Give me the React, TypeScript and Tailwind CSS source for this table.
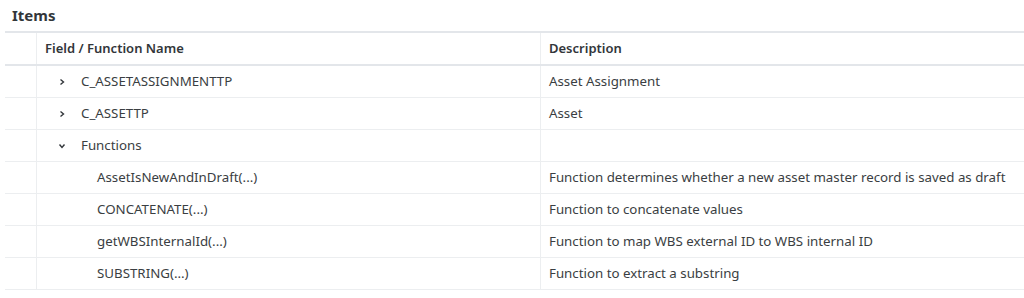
import React from "react";

type Row = { name: string; desc: string; level: 0 | 1; chevron?: "right" | "down" };

const rows: Row[] = [
  { name: "C_ASSETASSIGNMENTTP", desc: "Asset Assignment", level: 0, chevron: "right" },
  { name: "C_ASSETTP", desc: "Asset", level: 0, chevron: "right" },
  { name: "Functions", desc: "", level: 0, chevron: "down" },
  { name: "AssetIsNewAndInDraft(...)", desc: "Function determines whether a new asset master record is saved as draft", level: 1 },
  { name: "CONCATENATE(...)", desc: "Function to concatenate values", level: 1 },
  { name: "getWBSInternalId(...)", desc: "Function to map WBS external ID to WBS internal ID", level: 1 },
  { name: "SUBSTRING(...)", desc: "Function to extract a substring", level: 1 },
];

function Chevron({ dir }: { dir: "right" | "down" }) {
  return (
    <svg width="8" height="8" viewBox="0 0 8 8" className="shrink-0">
      {dir === "right" ? (
        <path d="M2.5 1.5 L5.5 4 L2.5 6.5" fill="none" stroke="#32363a" strokeWidth="1.4" />
      ) : (
        <path d="M1.5 2.5 L4 5.5 L6.5 2.5" fill="none" stroke="#32363a" strokeWidth="1.4" />
      )}
    </svg>
  );
}

export default function App() {
  return (
    <div
      className="w-[1024px] h-[298px] bg-white overflow-hidden text-[#32363a]"
      style={{ fontFamily: '"Noto Sans", "Open Sans", Arial, sans-serif' }}
    >
      <div className="h-[31px] pl-[12px] pt-[5px] text-[15px] font-bold leading-[20px]">Items</div>
      <div className="ml-[5px]">
        <div className="flex h-[35px] border-t-2 border-b-2 border-[#e3e6ea] text-[13px] font-semibold">
          <div className="w-[32px] border-r border-[#eceef0]" />
          <div className="w-[504px] pl-[8px] flex items-center border-r border-[#eceef0]">Field / Function Name</div>
          <div className="flex-1 pl-[8px] flex items-center">Description</div>
        </div>
        {rows.map((r) => (
          <div key={r.name} className="flex h-[32px] border-b border-[#eceef0] text-[13.3px] text-[#3a3e42]">
            <div className="w-[32px] border-r border-[#eceef0]" />
            <div
              className={
                "w-[504px] flex items-center border-r border-[#eceef0] " +
                (r.level === 0 ? "pl-[21px]" : "pl-[60px]")
              }
            >
              {r.chevron && <Chevron dir={r.chevron} />}
              <span className={r.chevron ? "ml-[15px]" : ""}>{r.name}</span>
            </div>
            <div className="flex-1 pl-[8px] flex items-center">{r.desc}</div>
          </div>
        ))}
      </div>
    </div>
  );
}
